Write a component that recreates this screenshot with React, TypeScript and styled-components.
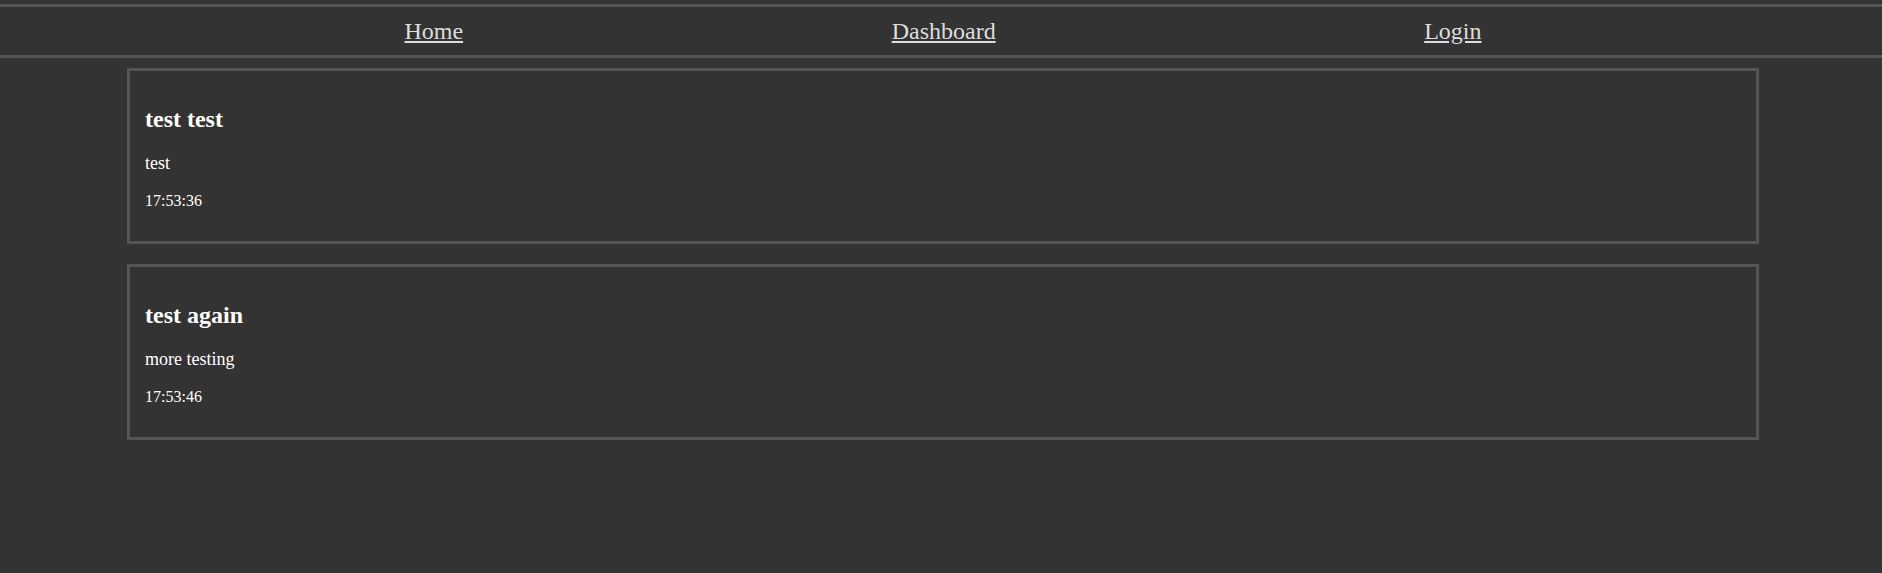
import React from "react";
import styled, { createGlobalStyle } from "styled-components";

const GlobalStyle = createGlobalStyle`
  html, body {
    margin: 0;
    padding: 0;
    background: #333333;
    min-height: 100%;
  }
  body {
    font-family: "Liberation Serif", "Times New Roman", serif;
    color: #ffffff;
  }
`;

const Page = styled.div`
  padding-top: 4px;
`;

const Nav = styled.nav`
  border-top: 3px solid #555555;
  border-bottom: 3px solid #555555;
`;

const NavList = styled.ul`
  list-style: none;
  margin: 0 auto;
  padding: 0 0 0 4px;
  width: 80%;
  height: 48px;
  display: flex;
  justify-content: space-around;
  align-items: center;
`;

const NavItem = styled.li`
  font-size: 24px;
`;

const NavLink = styled.a`
  color: #dddddd;
  text-decoration: underline;
`;

const Feed = styled.main`
  display: flex;
  flex-direction: column;
  gap: 20px;
  padding: 10px 123px 20px 127px;
`;

const Card = styled.article`
  border: 3px solid #555555;
  padding: 15px;
`;

const Title = styled.h2`
  font-size: 24px;
  font-weight: bold;
  margin: 20px 0 20px;
`;

const Body = styled.p`
  font-size: 18px;
  margin: 18px 0;
`;

const Time = styled.p`
  font-size: 16px;
  margin: 16px 0 16px;
`;

const posts = [
  { title: "test test", body: "test", time: "17:53:36" },
  { title: "test again", body: "more testing", time: "17:53:46" },
];

export default function App() {
  return (
    <Page>
      <GlobalStyle />
      <Nav>
        <NavList>
          <NavItem>
            <NavLink href="#">Home</NavLink>
          </NavItem>
          <NavItem>
            <NavLink href="#">Dashboard</NavLink>
          </NavItem>
          <NavItem>
            <NavLink href="#">Login</NavLink>
          </NavItem>
        </NavList>
      </Nav>
      <Feed>
        {posts.map((p) => (
          <Card key={p.time}>
            <Title>{p.title}</Title>
            <Body>{p.body}</Body>
            <Time>{p.time}</Time>
          </Card>
        ))}
      </Feed>
    </Page>
  );
}
